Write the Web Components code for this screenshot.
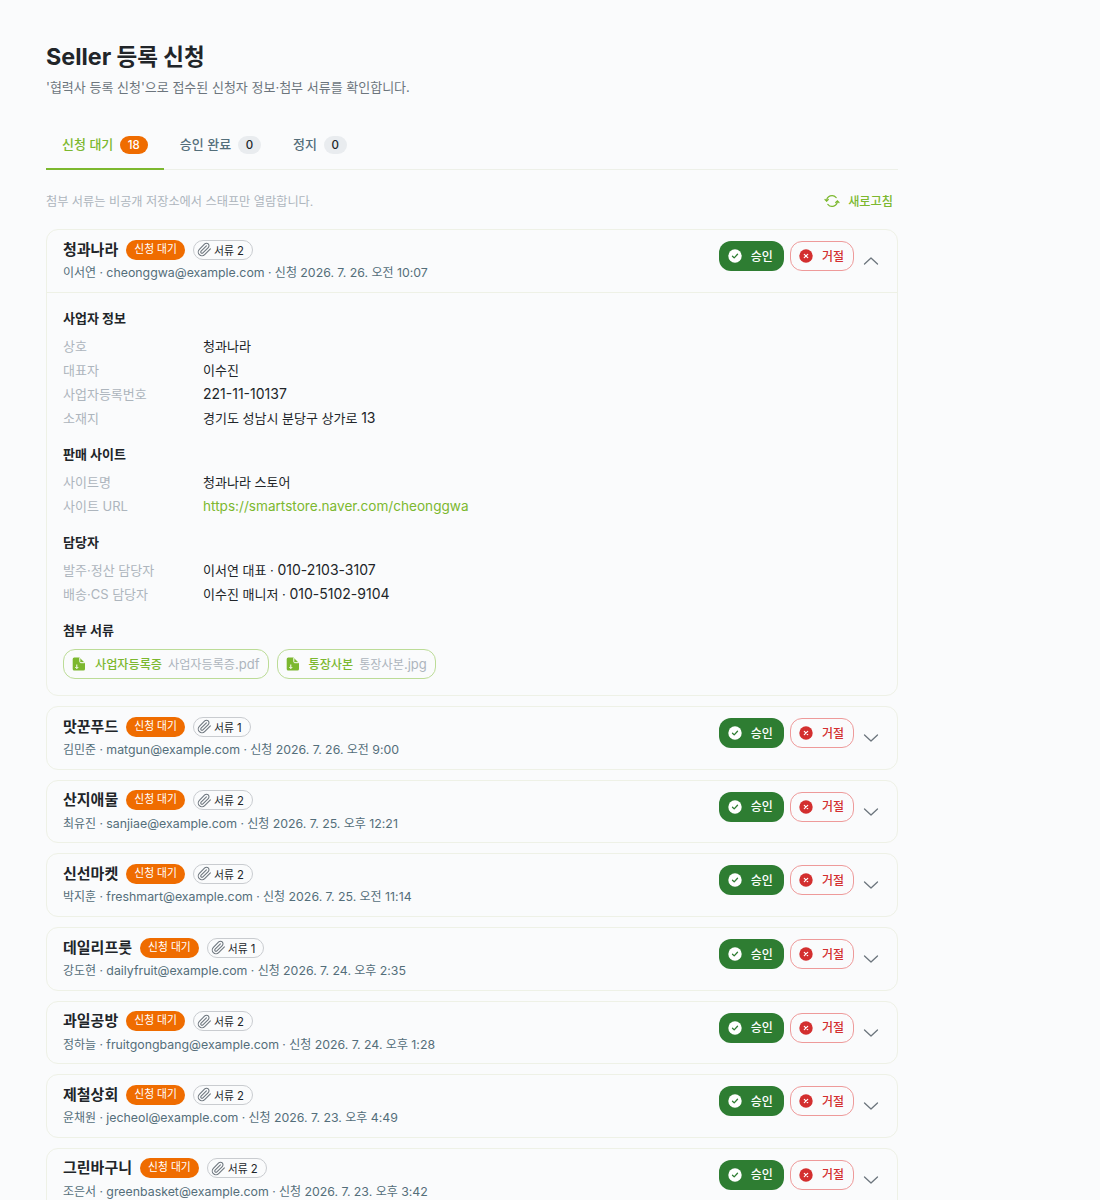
<!DOCTYPE html>
<html lang="ko">
<head>
<meta charset="utf-8">
<title>Seller 등록 신청</title>
<style>
  html, body { margin: 0; background: #fafbfc; }
  body { font-family: Inter, "Noto Sans CJK KR", sans-serif; color: #212529; }
</style>
</head>
<body>
<seller-page></seller-page>

<script>
const ICONS = {
  clip: `<svg viewBox="0 0 24 24" fill="none" stroke="currentColor" stroke-width="1.700" stroke-linecap="round" stroke-linejoin="round"><path d="m21.440 11.050-9.190 9.190a6 6 0 0 1-8.490-8.490l8.570-8.570A4 4 0 1 1 18 8.840l-8.590 8.570a2 2 0 0 1-2.830-2.830l8.490-8.480"/></svg>`,
  check: `<svg viewBox="0 0 14 14"><circle cx="7" cy="7" r="6.700" fill="#fff"/><path d="M4.500 7.200 6.200 8.900 9.500 5.300" fill="none" stroke="#2e7d32" stroke-width="1.300" stroke-linecap="round" stroke-linejoin="round"/></svg>`,
  cross: `<svg viewBox="0 0 14 14"><circle cx="7" cy="7" r="6.700" fill="#d32f2f"/><path d="M5.300 5.300 8.700 8.700M8.700 5.300 5.300 8.700" stroke="#fff" stroke-width="1.200" stroke-linecap="round"/></svg>`,
  up: `<svg viewBox="0 0 16 16" fill="none" stroke="#6c757d" stroke-width="1.300" stroke-linecap="round" stroke-linejoin="round"><path d="M1.500 11 8 5l6.500 6"/></svg>`,
  down: `<svg viewBox="0 0 16 16" fill="none" stroke="#6c757d" stroke-width="1.300" stroke-linecap="round" stroke-linejoin="round"><path d="M1.500 5 8 11l6.500-6"/></svg>`,
  refresh: `<svg viewBox="0 0 16 16" fill="none" stroke="#7cb82f" stroke-width="1.200" stroke-linecap="round" stroke-linejoin="round"><path d="M2.600 8A5.400 5.400 0 0 1 12.200 4.600"/><path d="M13.400 8A5.400 5.400 0 0 1 3.800 11.400"/><path d="M1 6.500 2.600 8.200 4.300 6.500"/><path d="M11.700 9.500 13.400 7.800 15 9.500"/></svg>`,
  file: `<svg viewBox="0 0 14 14"><path d="M2.200.5h5.300L13 6v6A1.500 1.500 0 0 1 11.500 13.500h-9.300A1.500 1.500 0 0 1 .7 12V2A1.500 1.500 0 0 1 2.200.5z" fill="#7cb82f"/><path d="M7.800.8v3.900a1 1 0 0 0 1 1h4" fill="none" stroke="#fff" stroke-width="1"/><path d="M4.800 7.500v4M3.300 10 4.800 11.500 6.300 10" fill="none" stroke="#fff" stroke-width="1"/></svg>`
};

// latin letters and digits sit a little larger than the hangul around them
const mix = (text) => text.replace(/[A-Za-z0-9@.:\/_-]+/g, (m) => `<span class="en">${m}</span>`);

class SellerPage extends HTMLElement {
  constructor() {
    super();
    this.attachShadow({ mode: "open" });
  }
  connectedCallback() {
    this.shadowRoot.innerHTML = `
    <style>
      :host { display: block; width: 852px; padding: 41px 0 0 46px; }
      h1 { margin: 0; font-size: 22.5px; line-height: 32px; font-weight: 700; color: #212529; }
      h1 .en { font-size: 23.300px; }
      .sub { margin: 3px 0 0; font-size: 13px; line-height: 22px; color: #6c757d; }
      .tabs { display: flex; margin-top: 26px; border-bottom: 1px solid #edf0e8; }
      .note { display: flex; justify-content: space-between; align-items: center; margin: 20.500px 0 17px; height: 22px; padding-right: 5px; }
      .note span { font-size: 12.200px; color: #adb5bd; }
      .list { display: flex; flex-direction: column; gap: 10px; }
    </style>
    <h1>${mix("Seller 등록 신청")}</h1>
    <p class="sub">'협력사 등록 신청'으로 접수된 신청자 정보·첨부 서류를 확인합니다.</p>
    <div class="tabs">
      <status-tab active count="18">신청 대기</status-tab>
      <status-tab count="0">승인 완료</status-tab>
      <status-tab count="0">정지</status-tab>
    </div>
    <div class="note"><span>첨부 서류는 비공개 저장소에서 스태프만 열람합니다.</span><refresh-button>새로고침</refresh-button></div>
    <div class="list">
      <seller-card name="청과나라" files="2" meta="이서연 · cheonggwa@example.com · 신청 2026. 7. 26. 오전 10:07" open>
        <detail-section title="사업자 정보">
          <detail-row label="상호">청과나라</detail-row>
          <detail-row label="대표자">이수진</detail-row>
          <detail-row label="사업자등록번호"><span class="num">221-11-10137</span></detail-row>
          <detail-row label="소재지">경기도 성남시 분당구 상가로 <span class="num">13</span></detail-row>
        </detail-section>
        <detail-section title="판매 사이트">
          <detail-row label="사이트명">청과나라 스토어</detail-row>
          <detail-row label="사이트 URL" link><span>https://smartstore.naver.com/cheonggwa</span></detail-row>
        </detail-section>
        <detail-section title="담당자">
          <detail-row label="발주·정산 담당자">이서연 대표 · <span class="num">010-2103-3107</span></detail-row>
          <detail-row label="배송·CS 담당자">이수진 매니저 · <span class="num">010-5102-9104</span></detail-row>
        </detail-section>
        <detail-section title="첨부 서류" chips>
          <file-chip kind="사업자등록증" name="사업자등록증.pdf"></file-chip>
          <file-chip kind="통장사본" name="통장사본.jpg"></file-chip>
        </detail-section>
      </seller-card>
      <seller-card name="맛꾼푸드" files="1" meta="김민준 · matgun@example.com · 신청 2026. 7. 26. 오전 9:00"></seller-card>
      <seller-card name="산지애물" files="2" meta="최유진 · sanjiae@example.com · 신청 2026. 7. 25. 오후 12:21"></seller-card>
      <seller-card name="신선마켓" files="2" meta="박지훈 · freshmart@example.com · 신청 2026. 7. 25. 오전 11:14"></seller-card>
      <seller-card name="데일리프룻" files="1" meta="강도현 · dailyfruit@example.com · 신청 2026. 7. 24. 오후 2:35"></seller-card>
      <seller-card name="과일공방" files="2" meta="정하늘 · fruitgongbang@example.com · 신청 2026. 7. 24. 오후 1:28"></seller-card>
      <seller-card name="제철상회" files="2" meta="윤채원 · jecheol@example.com · 신청 2026. 7. 23. 오후 4:49"></seller-card>
      <seller-card name="그린바구니" files="2" meta="조은서 · greenbasket@example.com · 신청 2026. 7. 23. 오후 3:42"></seller-card>
    </div>`;
  }
}

class StatusTab extends HTMLElement {
  constructor() {
    super();
    this.attachShadow({ mode: "open" });
  }
  connectedCallback() {
    this.shadowRoot.innerHTML = `
    <style>
      :host { display: flex; align-items: center; gap: 6.500px; height: 45.500px; padding: 0 16px 5px; margin-bottom: -1px; box-sizing: border-box; border-bottom: 2px solid transparent; font-size: 13px; font-weight: 500; color: #546e7a; }
      :host([active]) { color: #7cb82f; border-bottom-color: #7cb82f; }
      b { font-weight: 500; font-size: 11.500px; line-height: 18px; padding: 0 8px; margin-top: 3px; border-radius: 9px; text-align: center; background: #e9ecef; color: #212529; }
      :host([active]) b { background: #ef6c00; color: #fff; }
    </style>
    <slot></slot><b>${this.getAttribute("count")}</b>`;
  }
}

class RefreshButton extends HTMLElement {
  constructor() {
    super();
    this.attachShadow({ mode: "open" });
  }
  connectedCallback() {
    this.shadowRoot.innerHTML = `
    <style>
      :host { display: inline-flex; align-items: center; gap: 8px; font-size: 12.200px; font-weight: 500; color: #7cb82f; }
      svg { width: 16px; height: 16px; }
    </style>
    ${ICONS.refresh}<slot></slot>`;
  }
}

class SellerCard extends HTMLElement {
  constructor() {
    super();
    this.attachShadow({ mode: "open" });
  }
  connectedCallback() {
    const open = this.hasAttribute("open");
    this.shadowRoot.innerHTML = `
    <style>
      :host { display: block; background: #fafbfc; border: 1px solid #eef1e6; border-radius: 12px; }
      .head { display: flex; align-items: flex-start; padding: 6px 16px 8.670px; }
      .info { flex: 1; min-width: 0; }
      .line { display: flex; align-items: center; gap: 8px; height: 24px; }
      .name { font-size: 15px; font-weight: 700; color: #212529; }
      .pill { font-size: 10.800px; line-height: 20px; padding: 0 8px; border-radius: 10px; background: #ef6c00; color: #fff; margin-top: 3px; }
      .docs { display: flex; align-items: center; gap: 2px; height: 18px; padding: 0 8px 0 3px; border: 1px solid #c9ccd0; border-radius: 10px; font-size: 10.800px; color: #212529; margin-top: 3px; }
      .docs .en { font-size: 11.300px; }
      .docs svg { width: 15px; height: 15px; color: #6c757d; }
      .meta { font-size: 12px; line-height: 20px; margin-top: 3px; color: #546e7a; }
      .meta .en { font-size: 12.350px; }
      .actions { display: flex; align-items: center; gap: 6px; margin-top: 5px; }
      .btn { display: flex; align-items: center; gap: 9px; height: 30px; box-sizing: border-box; border-radius: 12px; font-size: 12px; font-weight: 500; padding: 0 11px 2px 9px; }
      .btn svg { width: 14px; height: 14px; margin-top: 2px; }
      .ok { background: #2e7d32; color: #fff; }
      .no { border: 1px solid #ee9a9a; color: #d32f2f; padding: 0 9px 2px 8px; }
      .chev { width: 16px; height: 16px; margin-left: 9px; margin-right: 2px; margin-top: 17px; }
      .body { border-top: 1px solid #eef1e6; padding: 13px 16px 16.400px; display: flex; flex-direction: column; gap: 12px; }
    </style>
    <div class="head">
      <div class="info">
        <div class="line">
          <span class="name">${this.getAttribute("name")}</span>
          <span class="pill">신청 대기</span>
          <span class="docs">${ICONS.clip}<span>서류 <span class="en">${this.getAttribute("files")}</span></span></span>
        </div>
        <div class="meta">${mix(this.getAttribute("meta"))}</div>
      </div>
      <div class="actions">
        <div class="btn ok">${ICONS.check}승인</div>
        <div class="btn no">${ICONS.cross}거절</div>
      </div>
      <div class="chev">${open ? ICONS.up : ICONS.down}</div>
    </div>
    ${open ? `<div class="body"><slot></slot></div>` : ""}`;
  }
}

class DetailSection extends HTMLElement {
  constructor() {
    super();
    this.attachShadow({ mode: "open" });
  }
  connectedCallback() {
    const chips = this.hasAttribute("chips");
    this.shadowRoot.innerHTML = `
    <style>
      :host { display: block; }
      h3 { margin: 0 0 4px; font-size: 13px; line-height: 24px; font-weight: 700; color: #212529; }
      .chips { display: flex; gap: 8px; margin-top: 7px; }
    </style>
    <h3>${this.getAttribute("title")}</h3>
    ${chips ? `<div class="chips"><slot></slot></div>` : `<slot></slot>`}`;
  }
}

class DetailRow extends HTMLElement {
  constructor() {
    super();
    this.attachShadow({ mode: "open" });
  }
  connectedCallback() {
    const link = this.hasAttribute("link");
    this.shadowRoot.innerHTML = `
    <style>
      :host { display: grid; grid-template-columns: 140px 1fr; font-size: 13px; line-height: 24px; color: #212529; }
      .label { color: #adb5bd; }
      .value { color: ${link ? "#7cb82f" : "#212529"}; }
      ::slotted(span) { font-size: 13.600px; }
      ::slotted(.num) { font-size: 14px; }
    </style>
    <span class="label">${this.getAttribute("label")}</span>
    <span class="value"><slot></slot></span>`;
  }
}

class FileChip extends HTMLElement {
  constructor() {
    super();
    this.attachShadow({ mode: "open" });
  }
  connectedCallback() {
    this.shadowRoot.innerHTML = `
    <style>
      :host { display: inline-flex; align-items: center; height: 30px; box-sizing: border-box; padding: 0 8px 0 8px; border: 1px solid #bcdc97; border-radius: 12px; font-size: 12.150px; }
      svg { width: 14px; height: 14px; margin-right: 9px; }
      b { font-weight: 500; color: #7cb82f; margin-right: 6px; }
      span { color: #adb5bd; }
      .en { font-size: 13px; }
    </style>
    ${ICONS.file}<b>${this.getAttribute("kind")}</b><span>${mix(this.getAttribute("name"))}</span>`;
  }
}

customElements.define("status-tab", StatusTab);
customElements.define("refresh-button", RefreshButton);
customElements.define("detail-row", DetailRow);
customElements.define("detail-section", DetailSection);
customElements.define("file-chip", FileChip);
customElements.define("seller-card", SellerCard);
customElements.define("seller-page", SellerPage);
</script>
</body>
</html>
